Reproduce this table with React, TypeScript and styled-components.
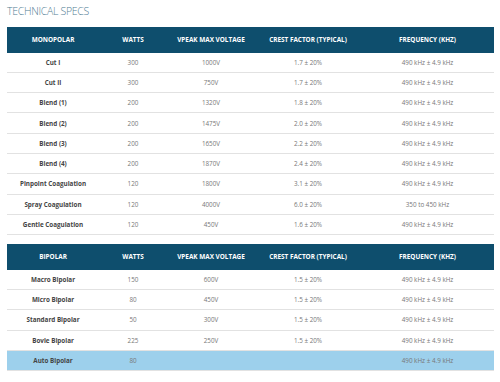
import React from "react";
import styled, { createGlobalStyle } from "styled-components";

const GlobalStyle = createGlobalStyle`
  body {
    margin: 0;
    background: #ffffff;
    font-family: "Open Sans", "Liberation Sans", sans-serif;
  }
`;

type Row = [string, string, string, string, string];

const monopolar: Row[] = [
  ["Cut I", "300", "1000V", "1.7 ± 20%", "490 kHz ± 4.9 kHz"],
  ["Cut II", "300", "750V", "1.7 ± 20%", "490 kHz ± 4.9 kHz"],
  ["Blend (1)", "200", "1320V", "1.8 ± 20%", "490 kHz ± 4.9 kHz"],
  ["Blend (2)", "200", "1475V", "2.0 ± 20%", "490 kHz ± 4.9 kHz"],
  ["Blend (3)", "200", "1650V", "2.2 ± 20%", "490 kHz ± 4.9 kHz"],
  ["Blend (4)", "200", "1870V", "2.4 ± 20%", "490 kHz ± 4.9 kHz"],
  ["Pinpoint Coagulation", "120", "1800V", "3.1 ± 20%", "490 kHz ± 4.9 kHz"],
  ["Spray Coagulation", "120", "4000V", "6.0 ± 20%", "350 to 450 kHz"],
  ["Gentle Coagulation", "120", "450V", "1.6 ± 20%", "490 kHz ± 4.9 kHz"],
];

const bipolar: Row[] = [
  ["Macro Bipolar", "150", "600V", "1.5 ± 20%", "490 kHz ± 4.9 kHz"],
  ["Micro Bipolar", "80", "450V", "1.5 ± 20%", "490 kHz ± 4.9 kHz"],
  ["Standard Bipolar", "50", "300V", "1.5 ± 20%", "490 kHz ± 4.9 kHz"],
  ["Bovie Bipolar", "225", "250V", "1.5 ± 20%", "490 kHz ± 4.9 kHz"],
  ["Auto Bipolar", "80", "", "", "490 kHz ± 4.9 kHz"],
];

const widths = [92, 68, 88, 106, 133];

const Page = styled.div`
  padding: 5px 6px 0 7px;
  width: 487px;
`;

const Title = styled.h2`
  margin: 0 0 9px;
  font-size: 10.5px;
  font-weight: 300;
  line-height: 13px;
  color: #4f7d93;
  letter-spacing: -0.3px;
`;

const Table = styled.table`
  width: 487px;
  border-collapse: collapse;
  table-layout: fixed;
  margin-bottom: 9px;
`;

const HeadCell = styled.th`
  background: #0e4e6d;
  color: #ffffff;
  height: 25.5px;
  padding: 0;
  font-size: 6.4px;
  font-weight: 700;
  text-transform: uppercase;
  text-align: center;
`;

const BodyRow = styled.tr<{ $highlight?: boolean }>`
  background: ${(p) => (p.$highlight ? "#9dd0ec" : "#ffffff")};
  border-bottom: 1px solid #e2e2e2;
`;

const Cell = styled.td<{ $label?: boolean }>`
  height: 19.3px;
  padding: 0;
  text-align: center;
  font-size: 6.3px;
  font-weight: ${(p) => (p.$label ? 700 : 400)};
  color: ${(p) => (p.$label ? "#444444" : "#777777")};
`;

const SpecTable = ({
  title,
  rows,
  highlightLast,
}: {
  title: string;
  rows: Row[];
  highlightLast?: boolean;
}) => (
  <Table>
    <colgroup>
      {widths.map((w, i) => (
        <col key={i} style={{ width: w }} />
      ))}
    </colgroup>
    <thead>
      <tr>
        <HeadCell>{title}</HeadCell>
        <HeadCell>Watts</HeadCell>
        <HeadCell>Vpeak Max Voltage</HeadCell>
        <HeadCell>Crest Factor (Typical)</HeadCell>
        <HeadCell>Frequency (kHz)</HeadCell>
      </tr>
    </thead>
    <tbody>
      {rows.map((r, i) => (
        <BodyRow key={i} $highlight={highlightLast && i === rows.length - 1}>
          {r.map((c, j) => (
            <Cell key={j} $label={j === 0}>
              {c}
            </Cell>
          ))}
        </BodyRow>
      ))}
    </tbody>
  </Table>
);

export default function App() {
  return (
    <>
      <GlobalStyle />
      <Page>
        <Title>TECHNICAL SPECS</Title>
        <SpecTable title="Monopolar" rows={monopolar} />
        <SpecTable title="Bipolar" rows={bipolar} highlightLast />
      </Page>
    </>
  );
}
